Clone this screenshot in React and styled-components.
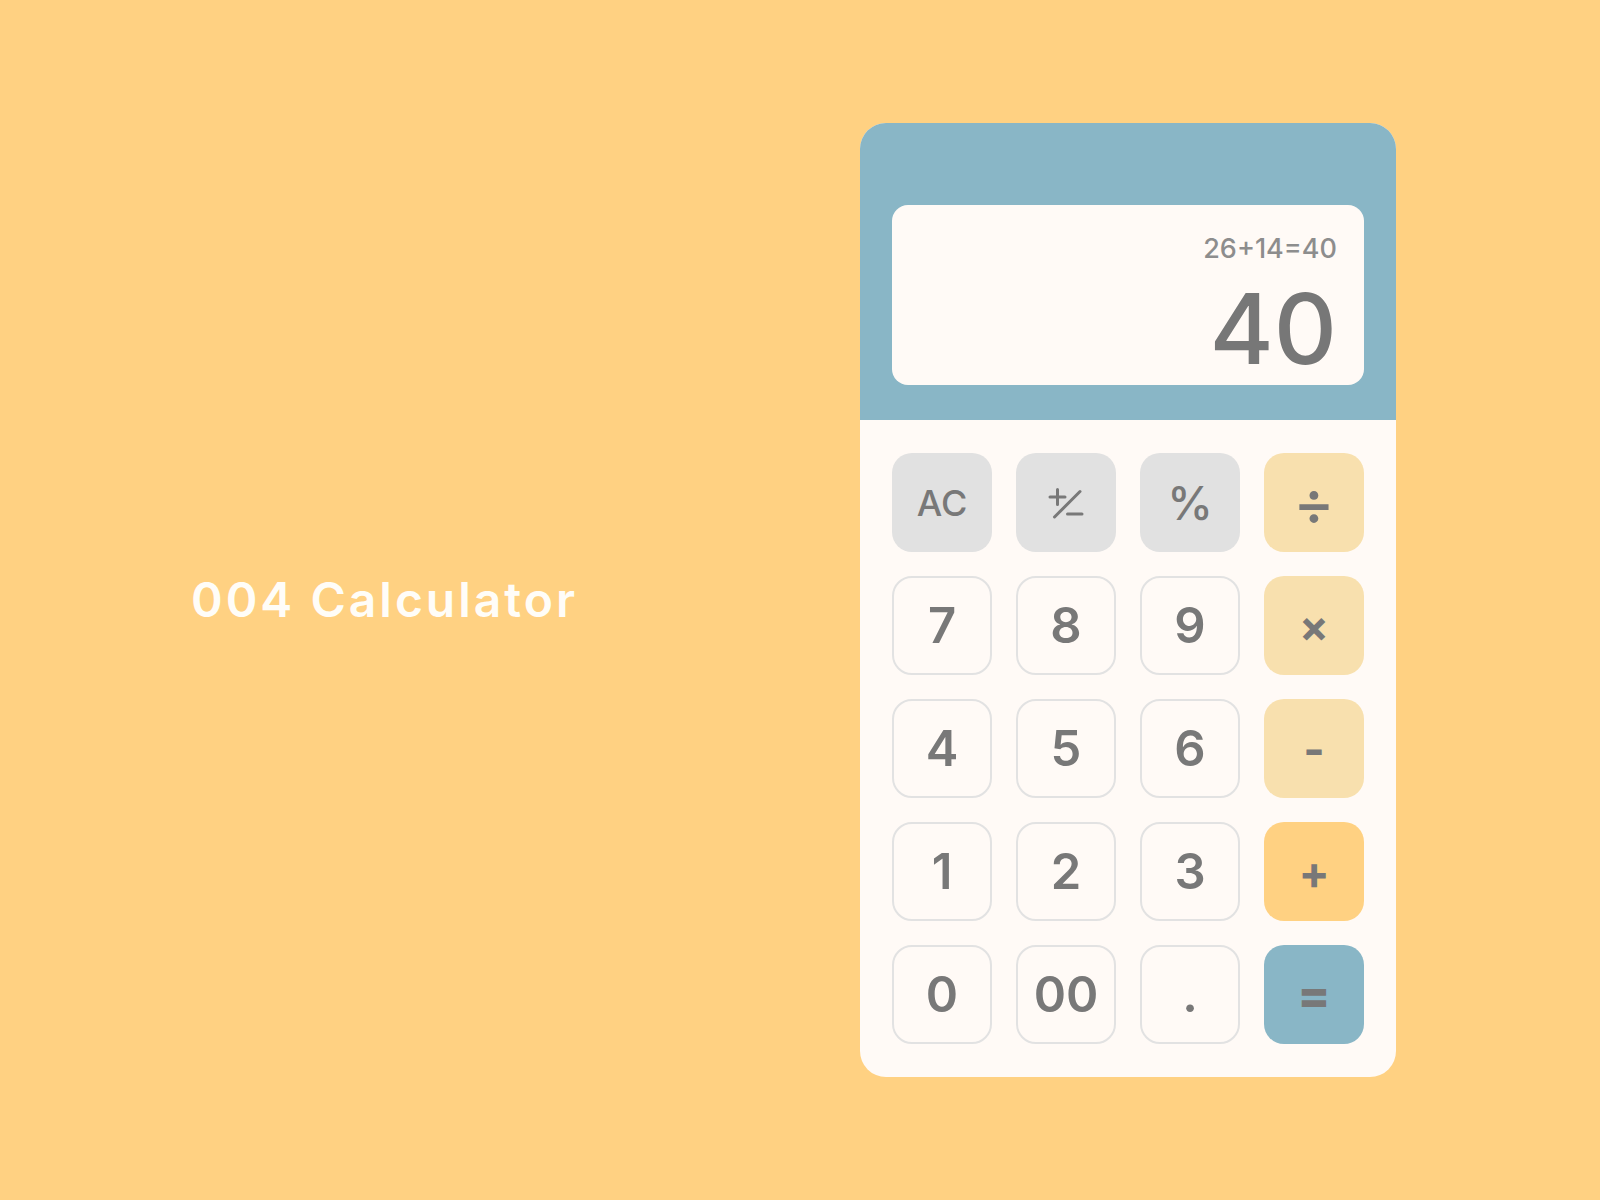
import React from 'react';
import styled, { createGlobalStyle } from 'styled-components';

const GlobalStyle = createGlobalStyle`
  html, body {
    margin: 0;
    padding: 0;
    background: #ffd182;
  }
  body {
    font-family: Inter, "Liberation Sans", sans-serif;
  }
  * { box-sizing: border-box; }
`;

const Page = styled.div`
  display: flex;
  align-items: center;
  height: 1200px;
  padding-left: 191px;
  background: #ffd182;
`;

const Title = styled.h1`
  width: 669px;
  margin: 0;
  font-size: 48px;
  font-weight: 600;
  letter-spacing: 3px;
  line-height: 1;
  color: #fffdf8;
`;

const Card = styled.div`
  width: 536px;
  border-radius: 26px;
  overflow: hidden;
  background: #fffaf6;
`;

const Header = styled.div`
  background: #89b6c6;
  padding: 82px 32px 35px;
`;

const Screen = styled.div`
  height: 180px;
  border-radius: 16px;
  background: #fffaf6;
  padding: 30px 27px 0;
  display: flex;
  flex-direction: column;
  align-items: flex-end;
`;

const Expression = styled.div`
  font-size: 27px;
  font-weight: 500;
  line-height: 1;
  color: #8d8d8d;
`;

const Result = styled.div`
  margin-top: 18px;
  font-size: 98px;
  font-weight: 500;
  line-height: 1;
  color: #777777;
`;

const Keys = styled.div`
  display: grid;
  grid-template-columns: repeat(4, 100px);
  grid-auto-rows: 99px;
  gap: 24px;
  padding: 33px 32px;
`;

const tones = {
  num: '#fffaf6',
  fn: '#e1e1e1',
  op: '#f8e0ae',
  accent: '#ffd182',
  eq: '#89b6c6',
};

const Key = styled.button`
  display: flex;
  align-items: center;
  justify-content: center;
  padding: 0;
  border-radius: 20px;
  border: ${p => (p.$tone === 'num' ? '2.5px solid #e2e2e2' : 'none')};
  background: ${p => tones[p.$tone]};
  font-family: inherit;
  font-size: ${p => p.$size || 49}px;
  font-weight: ${p => p.$weight || 600};
  line-height: 1;
  color: #787878;
  cursor: pointer;
`;

// plus / minus with slash
const SignIcon = () => (
  <svg width="100" height="100" viewBox="0 0 100 100" fill="none" stroke="#787878" strokeWidth="3" strokeLinecap="round">
    <path d="M34 44h15M41.5 36.5v15" />
    <path d="M38.5 64L64 38.5" />
    <path d="M51.5 61h14.5" />
  </svg>
);

const keys = [
  { label: 'AC', tone: 'fn', size: 36, weight: 500 },
  { label: <SignIcon />, tone: 'fn' },
  { label: '%', tone: 'fn', size: 46, weight: 500 },
  { label: '÷', tone: 'op', size: 62, weight: 500 },
  { label: '7', tone: 'num' },
  { label: '8', tone: 'num' },
  { label: '9', tone: 'num' },
  { label: '×', tone: 'op', size: 44, weight: 700 },
  { label: '4', tone: 'num' },
  { label: '5', tone: 'num' },
  { label: '6', tone: 'num' },
  { label: '-', tone: 'op', size: 46, weight: 700 },
  { label: '1', tone: 'num' },
  { label: '2', tone: 'num' },
  { label: '3', tone: 'num' },
  { label: '+', tone: 'accent', size: 46, weight: 700 },
  { label: '0', tone: 'num' },
  { label: '00', tone: 'num' },
  { label: '.', tone: 'num' },
  { label: '=', tone: 'eq', size: 48, weight: 800 },
];

export default function App() {
  return (
    <>
      <GlobalStyle />
      <Page>
        <Title>004 Calculator</Title>
        <Card>
          <Header>
            <Screen>
              <Expression>26+14=40</Expression>
              <Result>40</Result>
            </Screen>
          </Header>
          <Keys>
            {keys.map((k, i) => (
              <Key key={i} $tone={k.tone} $size={k.size} $weight={k.weight}>
                {k.label}
              </Key>
            ))}
          </Keys>
        </Card>
      </Page>
    </>
  );
}
